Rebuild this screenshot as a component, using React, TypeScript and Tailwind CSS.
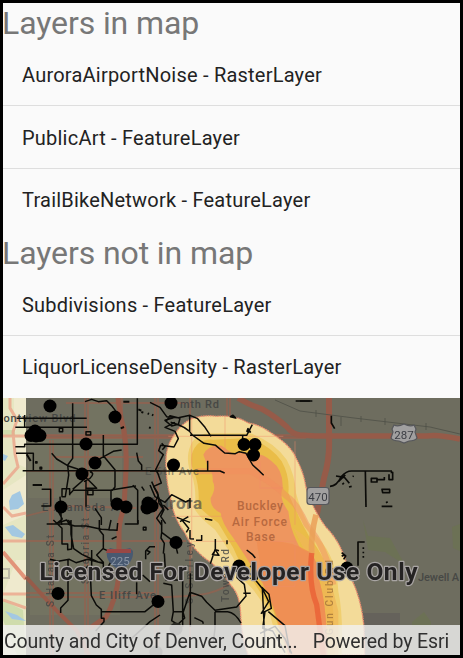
import React from 'react';

const inMap = ['AuroraAirportNoise - RasterLayer', 'PublicArt - FeatureLayer', 'TrailBikeNetwork - FeatureLayer'];
const notInMap = ['Subdivisions - FeatureLayer', 'LiquorLicenseDensity - RasterLayer'];

function LayerList({ title, layers, headClass }: { title: string; layers: string[]; headClass: string }) {
  return (
    <section>
      <h1 className={'-ml-px text-[32px] leading-[40px] tracking-[-0.1px] whitespace-nowrap text-[#777777] ' + headClass}>
        {title}
      </h1>
      <ul>
        {layers.map((name, i) => (
          <li
            key={name}
            className={
              'flex items-center pl-[19px] text-[20px] tracking-[0.22px] whitespace-nowrap text-[#222222] ' +
              (i < layers.length - 1 ? 'h-[63px] border-b border-[#dedede] pt-[2px]' : 'h-[62px]')
            }
          >
            {name}
          </li>
        ))}
      </ul>
    </section>
  );
}

const art = [
  [50, 406], [35, 431], [31, 435.5], [40, 435.5], [36, 436], [115, 417], [86, 444], [95, 463], [82, 474],
  [61, 507], [117, 504], [126, 507], [147, 508], [152, 506], [148, 503], [171, 403], [173.5, 465],
  [244, 444.5], [255, 444.5], [253.5, 455], [176, 542.5], [58, 593.5], [158, 601.5], [239, 566], [347, 568],
];

const hollow = [[176, 629], [156, 652]];

function MapView() {
  return (
    <svg className="block h-full w-full" viewBox="3 398 457 257" fontFamily="Roboto, sans-serif">
      <rect x="3" y="398" width="457" height="257" fill="#e6e6c2" />
      <path d="M3 398h23v16l-12 20v-36zM3 490l23-15v40l-23 10zM3 595h23v-35h-10zM14 438h12v30l-8-4z" fill="#efeace" />
      <path d="M3 430h12v6H3zM3 600l20 10 3 45h-9l-14-35z" fill="#cfdcac" />
      <path d="M12 495l8-4 4 13-6 5-8 1-1-9zM3 454l5 2-3 5-2-1zM5 527l8-2 12 9-3 4-10-2zM5 611l12 4 9 6-14-2z" fill="#a3c8e2" />
      <path d="M3 569h6v9H3" fill="none" stroke="#bbb9a5" strokeWidth="2" />
      <rect x="26" y="398" width="434" height="257" fill="#6e6d5f" />
      <path d="M28 438h62v60H28zM88 398h34v100H88zM30 540h90v75H30z" fill="#747461" opacity=".8" />
      <path d="M363 520l5 30 17 2 20 13-15-27-22-2zM412 622l12-10 7 10v5h-19zM452 527l8-3v27l-7-3z" fill="#6c7352" opacity=".75" />
      <path d="M330 613h70v12h-67z" fill="#65625b" />

      <g fill="none" stroke="#eba48a" strokeWidth="3">
        <path d="M3 436h23M10 398v10l7 12-4 12 2 22 3 13-15 17M3 507l9 9 14-3M3 541h23M3 594h23M3 600l23 8" strokeWidth="3" opacity=".8" />
        <path d="M3 552l23 27" strokeWidth="4" stroke="#e29479" />
      </g>
      <g fill="none" stroke="#94614f" strokeWidth="1.8" opacity=".75">
        <path d="M26 435h280M26 438h280M26 471h160M26 516l40-10 70 2M26 541h160M26 593h130M26 597h130M50 440v215M53 440v215M85 398v257M88 398v257M122 398v40M155 398v257M158 398v257M190 398v20M227 398v20M230 398v20M66 403h120M53 457h90M140 508h40M153 598c40-3 60 0 82-18M190 541v114" />
      </g>
      <g fill="none" stroke="#965b49">
        <path d="M118 398q2 18 6 32 3 20 2 40-1 20-2 38-4 10-5 22v45q-3 25-13 42l-16 11" strokeWidth="5" />
        <path d="M26 577l18 20 14 15 19 19 12 24" strokeWidth="4" />
        <path d="M26 436.500h280" strokeWidth="3" opacity=".6" />
        <path d="M238 398q14 8 24 11 14 8 25 18 5 7 13 8l15 1h112q10-2 33 3" strokeWidth="5.500" />
        <path d="M329 398v40q1 20-5 40l-5 25-4 22" strokeWidth="6" />
      </g>
      <path d="M300 411l54 7 76 9 30 7M341 417v9M316 410v7M361 416v6M385 418v7M426 423v7M275 400l25 11" fill="none" stroke="#4f5047" strokeWidth="1" opacity=".8" />

      <g transform="translate(160 398) scale(.33333)" strokeLinejoin="round">
        <path d="M95 62Q130 50 170 55Q225 50 265 75Q300 80 335 106Q395 145 408 180Q432 225 437 265Q460 340 500 390Q550 440 568 530Q605 600 612 690L614 771H265Q245 720 242 650Q240 590 215 565Q185 520 155 495Q100 460 75 405Q40 360 32 300Q20 260 18 205Q15 150 40 115Q60 80 95 62Z" fill="#f3db99" stroke="#ed8e70" strokeWidth="4" strokeDasharray="5 2" />
        <path d="M85 165Q95 110 145 106H270Q340 130 380 185Q405 230 408 285Q430 370 475 420Q530 480 535 580Q550 650 545 771H380Q345 715 330 650Q300 600 275 570Q235 535 220 480Q190 430 165 395Q120 360 105 335Q110 270 95 230Q80 200 85 165Z" fill="#f0cf70" />
        <path d="M95 170Q110 120 160 125L270 120Q335 145 365 190Q390 235 385 285Q415 360 450 420Q500 480 510 560Q525 650 525 771H390Q365 720 340 640Q305 590 280 550Q240 500 220 450Q190 400 175 375Q140 350 115 325Q120 270 105 230Q90 200 95 170Z" fill="#eabd48" />
        <path d="M400 390Q450 420 490 480L515 560L535 640V771H490Q500 640 480 540L430 450Z" fill="#f0b758" opacity=".7" />
        <path d="M130 170Q145 140 185 143L215 165H270Q310 165 335 190Q370 215 368 270Q355 300 385 340Q390 390 410 430Q420 460 450 462Q480 500 475 540Q500 610 502 771H385Q355 640 310 560Q260 480 220 420Q185 375 182 345Q150 330 152 300Q170 270 158 250Q160 220 145 210Z" fill="#ee965f" />
        <path d="M290 430Q380 420 450 462Q480 500 475 540Q500 610 502 771H385L340 630L310 560Z" fill="#ef8b50" opacity=".7" />
        <path d="M110 220H270Q330 245 380 295Q410 315 440 380Q500 450 520 560" fill="none" stroke="#f28e5e" strokeWidth="18" opacity=".5" />
        <path d="M468 350Q452 410 455 470" fill="none" stroke="#eaa058" strokeWidth="17" opacity=".85" />
        <path d="M455 465Q445 560 470 620L490 771" fill="none" stroke="#ea6337" strokeWidth="16" opacity=".85" />
        <path d="M95 60V480M195 55V160M25 115H370M405 130V380M300 190V270H370M35 355H190M100 430H230M330 430H405V565H300" fill="none" stroke="#f08b6a" strokeWidth="4" opacity=".35" />
      </g>

      <g fill="#474845" fontWeight="500">
        <text x="3.500" y="422" fontSize="11" textLength="72">ontview Blvd</text>
        <text x="180" y="408" fontSize="11" textLength="39">mth Rd</text>
        <text x="145" y="474.500" fontSize="11" textLength="54" opacity=".55">E 6th Ave</text>
        <text x="42" y="511" fontSize="11" textLength="76">E Alameda A</text>
        <text x="147" y="509" fontSize="17" fontWeight="bold" textLength="55" opacity=".65">Aurora</text>
        <text x="99" y="599" fontSize="11" textLength="57">E Iliff Ave</text>
        <text x="418" y="581" fontSize="11" textLength="41">Jewell A</text>
        <g opacity=".85">
          <text transform="translate(54 607) rotate(-90)" fontSize="10" textLength="72">S Havana St</text>
          <text transform="translate(89 584) rotate(-90)" fontSize="10" textLength="66">S Peoria St</text>
          <text transform="translate(193 604) rotate(-90)" fontSize="10" textLength="62">S Smiley</text>
          <text transform="translate(229 602) rotate(-90)" fontSize="10" textLength="53">Tower Rd</text>
          <text transform="translate(333 635) rotate(-90)" fontSize="10" textLength="75" fill="#a5773b">Gun Club Rd</text>
        </g>
      </g>
      <g fill="#b7693f" fontSize="12" fontWeight="500">
        <text x="237" y="510" textLength="46">Buckley</text>
        <text x="232" y="525.500" textLength="55">Air Force</text>
        <text x="246" y="541" textLength="29">Base</text>
      </g>

      <g fill="none" stroke="#0b0b08" strokeLinejoin="round">
        <g transform="translate(0 390) scale(.33333)" strokeWidth="4.5">
          <path d="M50 85h210M46 112h215M46 170h28v-7h338V25M68 242h410M218 40v165l-15 20 3 30-10 65h-10v-24h23v20M155 190l15 17 33 20 30 10 10 12M310 135v62l35 42v52l-8 10h-117l-10 10M255 35l20-7 20 7 25-3 15 15 15 20M48 190h52v52M74 75v35M410 188l5 25 10 12v17M125 298h27v50h-28M245 250l45 45h-32M365 180l-25 4-40 22-10 22M250 270l-32 28M258 270v80M333 300l75-12M333 300v35M270 245q16 4 0 20l-18 10M180 320l5 85M175 365l12 22-17 13 30-10 10 15M285 355l19 28v22M398 286l15 15v100M425 290l8 12M455 275l10 22 10 20-8 16" />
          <path d="M370 35h18M362 115l10-4M415 58l9 4M424 66l6 2M443 70l4 2M456 74l4 2M447 112l5 2M98 285h28M80 193l12 20" strokeWidth="6" />
          <path d="M178 115h10v10h-10zM258 125h14v10h-14zM107 215h4v4h-4zM120 232h5v5h-5zM263 300h16v14h-16z" />
        </g>
        <g transform="translate(150 390) scale(.33333)" strokeWidth="4.500">
          <path d="M0 37l30 15 20 28 35 3 35-7 23 10 22 26 18 27M119 75v50M50 92l10-15 30 8-5 18-20 5-20-17 25-8M62 97q50 13 65 38l35 25 35 6 27 23 32 2 12-6 20 5 20 35 22 20 11 11M120 136h170l17-32M278 137v18M75 97l-30 15 30 12 10 22-13 25-40-5-6 16 14 12-13 25-10 20 7 12 10 28-23 10 12 20 4 31 15 19-10 20 15 22M0 243h210l14 6M173 212v30M35 160l10 10-8 9M0 285l15 35 30 17 20-23 42 22 12-6M25 320l15 35-20 30 15 20M40 345l15 15M120 324v30M80 382l40 15M90 395l25-15M165 386l22 5" />
          <path d="M241 80l16 4-8-8zM291 124l10 2-7-10zM437 33h43" strokeWidth="5" />
        </g>
        <g transform="translate(300 390) scale(.33333)" strokeWidth="5">
          <path d="M0 33h37M94 77v22l10 17M90 289q20 0 34-29 15-17 30-17h122M272 247h6v22h-11v-16M196 243l2 108M245 349h32M108 258l25 4 15 18M116 274l20-19M127 283l5-4M147 291l8-2M158 260l3-2M214 265h17v11h-17zM231 269h22v-8M246 298h23v10h-21zM258 338l5-3" />
        </g>
        <g transform="translate(0 520) scale(.33333)" strokeWidth="4.500">
          <path d="M160 0l26 25v47h17v17l12-2V16l-10-16M140 12h64l20 6h35l45 10 47 3 2-22M298 0v30l12 15v40l-20 20 20 22v35M213 0v42l8 44 25 17 48 23 17 2M150 118l25 6 33-6 20 10 35-10 45 12M204 118v123l-22 23v15M265 137l-20 20 27 25 2 45 15 28 15 13v27h8v10l-25 28M303 275h132l27-22M480 285l-30 20-55 50M333 0l-7 32M350 50l-15 7M374 12h40V0M307 85l28 12v25l-15 25M275 90v50M437 118V93l12-13h16M438 90l12 6-8 8" />
          <path d="M430 22h8v8h-8zM428 165l22 20M410 187v36" />
        </g>
        <g transform="translate(150 520) scale(.33333)" strokeWidth="4.500">
          <path d="M35 0v37l40 30 8 34M35 37l-2 17 10 16-3 31M43 100l5 80h50v140M120 30v26l12 1M155 45v16h-17M196 57v29l-15 45M195 88l12 18-20-2 10-15 10 3M231 61v12M96 0l20 25-7 12M121 160v160M40 190l25 5 5 80h30l20-58 35 12 15 18 25 24 65-10 28-33-5-35-22-20 5-35M70 275l-5 27 18 12 21-20-5-17M195 275v50l-5 43M195 275h38q22 2 40 34M270 160l30 15 22 2-5-25-17-14M300 160l38 47 18 38-22 35 30-15-7-42-20-20 8 170M355 275l50 42 15 80M330 340l45-21 30 37 20 45M345 275l-7 50 30 8 37 65M133 293l25 12 2 6M290 90l17 13 9 11M280 220h22" />
        </g>
        <g transform="translate(300 520) scale(.33333)" strokeWidth="5">
          <path d="M174 137V66h20M125 98l12 10-6 10M125 109l9-5" />
          <path d="M190 82v35" strokeDasharray="5 8" />
        </g>
      </g>
      <g fill="#000">
        {art.map(([x, y], i) => (
          <circle key={i} cx={x} cy={y} r="6.500" />
        ))}
        {hollow.map(([x, y], i) => (
          <circle key={i} cx={x} cy={y} r="6.500" fill="#292923" />
        ))}
      </g>

      <g stroke="#56575b" strokeWidth="1.200" fill="#a1a0a0">
        <path d="M394 425q4 2 10-1 6 3 10 1l2 4-1 3 2 6q-2 3-8 3l-5 2-5-2q-6 0-8-3l2-6-1-3z" />
        <rect x="307" y="487.500" width="22" height="17" rx="3" />
      </g>
      <text x="404" y="438.500" textAnchor="middle" fontSize="11.500" fill="#3b3d43">287</text>
      <text x="318" y="500.500" textAnchor="middle" fontSize="11.500" fill="#3b3d43">470</text>
      <path d="M107 551l3-3q10 3 20 0l3 3q1 12-13 19-15-7-13-19z" fill="#485971" />
      <path d="M107 549h24v4h-25z" fill="#984745" />
      <text x="120" y="565" textAnchor="middle" fontSize="11.500" fill="#8995a5">225</text>

      <text x="39.500" y="580" fontSize="24.500" fontWeight="bold" textLength="378" fill="#252323" stroke="#a8a4a3" strokeWidth="2.500" strokeLinejoin="round" paintOrder="stroke">
        Licensed For Developer Use Only
      </text>
    </svg>
  );
}

export default function App() {
  return (
    <div className="flex h-[658px] w-[463px] flex-col overflow-hidden border-[3px] border-black bg-[#fafafa] font-['Roboto',sans-serif]">
      <LayerList title="Layers in map" layers={inMap} headClass="h-[40px]" />
      <LayerList title="Layers not in map" layers={notInMap} headClass="h-[42px] pt-[2px]" />
      <div className="relative mt-auto h-[257px] shrink-0 overflow-hidden">
        <MapView />
        <div className="absolute inset-x-0 bottom-0 flex h-[30px] items-center justify-between bg-[#f1f1f1]/80 pt-[3px] pr-[11px] pl-[1px] text-[19.5px] tracking-[-0.14px] whitespace-nowrap text-[#303030]">
          <span>County and City of Denver, Count...</span>
          <span>Powered by Esri</span>
        </div>
      </div>
    </div>
  );
}
